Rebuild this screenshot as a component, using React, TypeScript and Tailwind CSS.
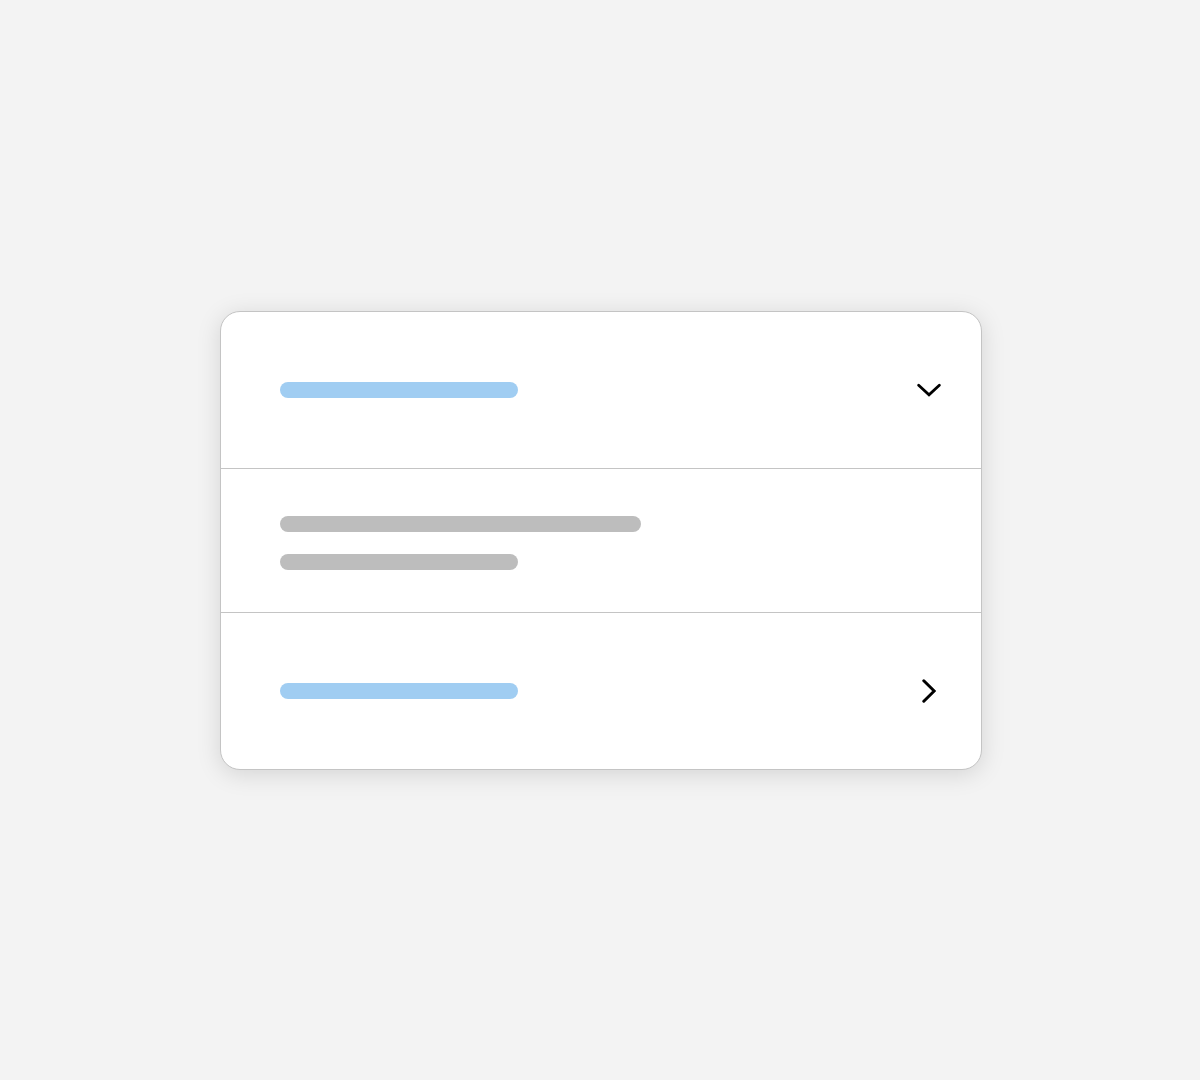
export default function App() {
  return (
    <div className="h-[1080px] w-full bg-[#f3f3f3] flex items-center justify-center pl-[2px]">
      <div className="w-[762px] bg-white border border-[#c4c4c4] rounded-[20px] overflow-hidden shadow-[0_4px_24px_rgba(0,0,0,0.13)]">
        {/* header row */}
        <div className="h-[156px] flex items-center justify-between pl-[59px] pr-[40px]">
          <div className="w-[238px] h-4 rounded-full bg-[#a0cdf2]" />
          <div className="w-6 h-6 flex items-center justify-center">
            <svg width="26" height="14" viewBox="0 0 26 14" fill="none">
              <path d="M1.8 1.8 L13 12.2 L24.2 1.8" stroke="#000" strokeWidth="3" strokeLinecap="round" strokeLinejoin="miter" />
            </svg>
          </div>
        </div>
        {/* body row */}
        <div className="h-[144px] border-t border-[#c4c4c4] flex flex-col gap-[22px] pl-[59px] pt-[47px]">
          <div className="w-[361px] h-4 rounded-full bg-[#bdbdbd]" />
          <div className="w-[238px] h-4 rounded-full bg-[#bdbdbd]" />
        </div>
        {/* footer row */}
        <div className="h-[157px] border-t border-[#c4c4c4] flex items-center justify-between pl-[59px] pr-[40px]">
          <div className="w-[238px] h-4 rounded-full bg-[#a0cdf2]" />
          <div className="w-6 h-6 flex items-center justify-center">
            <svg width="14" height="24" viewBox="0 0 14 24" fill="none">
              <path d="M1.8 1.8 L12.2 12 L1.8 22.2" stroke="#000" strokeWidth="3" strokeLinecap="round" strokeLinejoin="miter" />
            </svg>
          </div>
        </div>
      </div>
    </div>
  );
}
